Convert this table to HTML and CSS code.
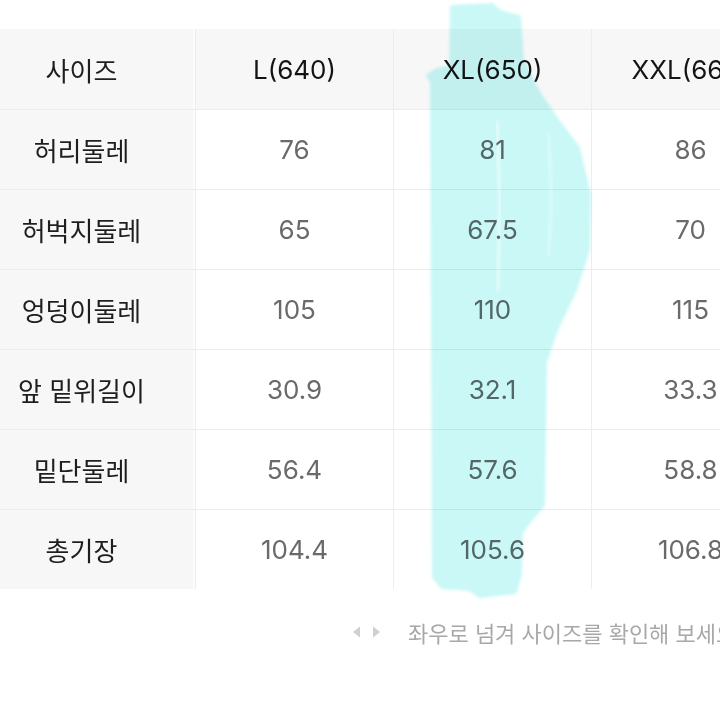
FILE: index.html
```html
<!DOCTYPE html>
<html lang="ko">
<head>
<meta charset="utf-8">
<title>사이즈</title>
<link rel="stylesheet" href="styles.css">
</head>
<body>
<div class="page">
  <div class="table">
    <div class="cell head label">사이즈</div>
    <div class="cell head">L(640)</div>
    <div class="cell head">XL(650)</div>
    <div class="cell head">XXL(660)</div>

    <div class="cell label">허리둘레</div>
    <div class="cell data">76</div>
    <div class="cell data">81</div>
    <div class="cell data">86</div>

    <div class="cell label">허벅지둘레</div>
    <div class="cell data">65</div>
    <div class="cell data">67.5</div>
    <div class="cell data">70</div>

    <div class="cell label">엉덩이둘레</div>
    <div class="cell data">105</div>
    <div class="cell data">110</div>
    <div class="cell data">115</div>

    <div class="cell label">앞 밑위길이</div>
    <div class="cell data">30.9</div>
    <div class="cell data">32.1</div>
    <div class="cell data">33.3</div>

    <div class="cell label">밑단둘레</div>
    <div class="cell data">56.4</div>
    <div class="cell data">57.6</div>
    <div class="cell data">58.8</div>

    <div class="cell label">총기장</div>
    <div class="cell data">104.4</div>
    <div class="cell data">105.6</div>
    <div class="cell data">106.8</div>
  </div>

  <div class="hint">
    <span class="arrows">
      <svg width="30" height="12" viewBox="0 0 30 12"><polygon points="8,0.5 8,11.5 1,6" fill="#d0d0d0"/><polygon points="21,0.5 21,11.5 28,6" fill="#d0d0d0"/></svg>
    </span>
    <span class="hint-text">좌우로 넘겨 사이즈를 확인해 보세요</span>
  </div>

  <svg class="marker" width="720" height="720" viewBox="0 0 720 720">
    <defs>
      <filter id="soft" x="-10%" y="-10%" width="120%" height="120%"><feGaussianBlur stdDeviation="1.5"/></filter>
    </defs>
    <path filter="url(#soft)" fill="#c9f8f7" stroke="#c9f8f7" stroke-width="4" stroke-linejoin="round"
      d="M452,7 L492,5 L500,12 L519,17 L522,60 L538,92 L557,120 L578,148 L589,195 L588,250 L575,290 L556,330 L545,362 L543,505 L531,519 L521,532 L520,574 L515,592 L480,596 L470,589 L442,587 L434,577 L432,82 L428,76 L437,70 L451,67 Z"/>
    <path filter="url(#soft)" fill="none" stroke="#ffffff" stroke-opacity="0.55" stroke-width="3" stroke-linecap="round"
      d="M497,122 L500,200 L498,290"/>
    <path filter="url(#soft)" fill="none" stroke="#ffffff" stroke-opacity="0.3" stroke-width="4" stroke-linecap="round"
      d="M548,135 L552,200 L548,255"/>
  </svg>
</div>
</body>
</html>
```

FILE: styles.css
```css
* { box-sizing: border-box; }
html, body { margin: 0; padding: 0; background: #ffffff; }
body {
  font-family: Inter, "Noto Sans CJK KR", sans-serif;
  width: 720px;
  height: 720px;
  overflow: hidden;
}
.page {
  position: relative;
  width: 720px;
  height: 720px;
  overflow: hidden;
  padding-top: 29px;
}
.table {
  display: grid;
  grid-template-columns: 195px 197px 197px 197px;
  grid-template-rows: 80px repeat(6, 79px);
  gap: 1px;
  background: #ededed;
  width: 789px;
}
.cell {
  display: flex;
  align-items: center;
  justify-content: center;
  font-size: 26px;
  white-space: nowrap;
  background: #ffffff;
  color: #6a6a6a;
}
.head {
  background: #f7f7f7;
  color: #141414;
}
.label {
  background: #f7f7f7;
  color: #1e1e1e;
  padding-right: 30px;
  border-right: 2px solid #fcfcfc;
}
.hint {
  display: flex;
  align-items: center;
  margin-left: 352px;
  margin-top: 30px;
  height: 26px;
  white-space: nowrap;
}
.arrows { display: flex; flex: none; width: 56px; }
.hint-text {
  flex: none;
  font-size: 22px;
  color: #a8a8a8;
  font-family: "Noto Sans CJK KR", sans-serif;
}
.marker {
  position: absolute;
  left: 0;
  top: 0;
  pointer-events: none;
  mix-blend-mode: multiply;
}
```
